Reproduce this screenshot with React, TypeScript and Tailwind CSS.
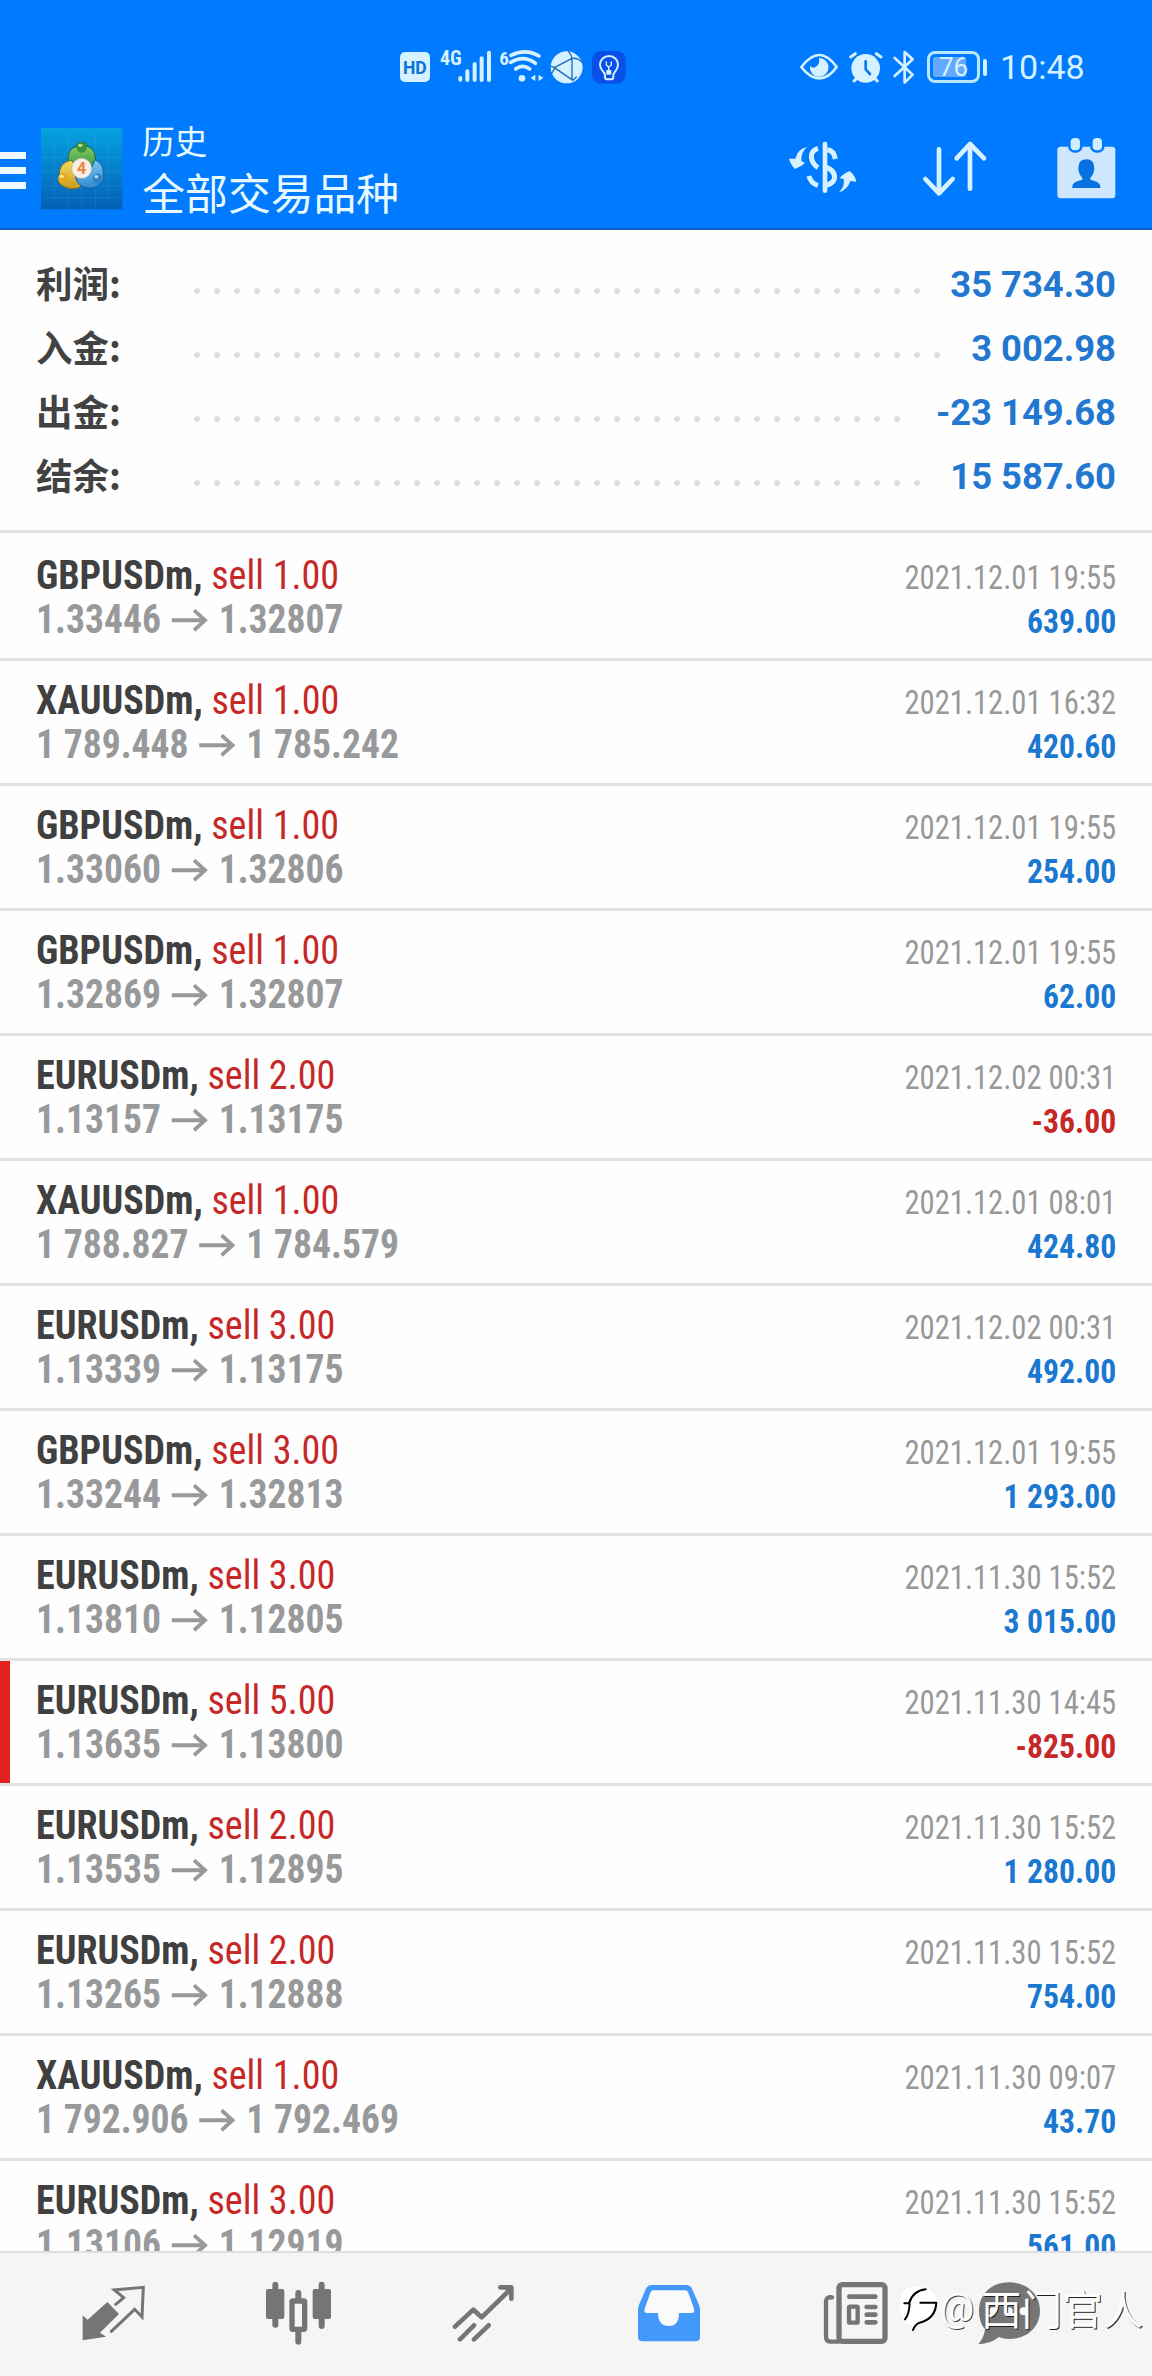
import type { ReactNode } from "react";

type Deal = {
  symbol: string;
  volume: string;
  open: string;
  close: string;
  time: string;
  profit: string;
  stopped?: boolean;
};

const summary = [
  { label: "利润:", value: "35 734.30", dots: 37 },
  { label: "入金:", value: "3 002.98", dots: 38 },
  { label: "出金:", value: "-23 149.68", dots: 36 },
  { label: "结余:", value: "15 587.60", dots: 37 },
];

const deals: Deal[] = [
  { symbol: "GBPUSDm", volume: "1.00", open: "1.33446", close: "1.32807", time: "2021.12.01 19:55", profit: "639.00" },
  { symbol: "XAUUSDm", volume: "1.00", open: "1 789.448", close: "1 785.242", time: "2021.12.01 16:32", profit: "420.60" },
  { symbol: "GBPUSDm", volume: "1.00", open: "1.33060", close: "1.32806", time: "2021.12.01 19:55", profit: "254.00" },
  { symbol: "GBPUSDm", volume: "1.00", open: "1.32869", close: "1.32807", time: "2021.12.01 19:55", profit: "62.00" },
  { symbol: "EURUSDm", volume: "2.00", open: "1.13157", close: "1.13175", time: "2021.12.02 00:31", profit: "-36.00" },
  { symbol: "XAUUSDm", volume: "1.00", open: "1 788.827", close: "1 784.579", time: "2021.12.01 08:01", profit: "424.80" },
  { symbol: "EURUSDm", volume: "3.00", open: "1.13339", close: "1.13175", time: "2021.12.02 00:31", profit: "492.00" },
  { symbol: "GBPUSDm", volume: "3.00", open: "1.33244", close: "1.32813", time: "2021.12.01 19:55", profit: "1 293.00" },
  { symbol: "EURUSDm", volume: "3.00", open: "1.13810", close: "1.12805", time: "2021.11.30 15:52", profit: "3 015.00" },
  { symbol: "EURUSDm", volume: "5.00", open: "1.13635", close: "1.13800", time: "2021.11.30 14:45", profit: "-825.00", stopped: true },
  { symbol: "EURUSDm", volume: "2.00", open: "1.13535", close: "1.12895", time: "2021.11.30 15:52", profit: "1 280.00" },
  { symbol: "EURUSDm", volume: "2.00", open: "1.13265", close: "1.12888", time: "2021.11.30 15:52", profit: "754.00" },
  { symbol: "XAUUSDm", volume: "1.00", open: "1 792.906", close: "1 792.469", time: "2021.11.30 09:07", profit: "43.70" },
  { symbol: "EURUSDm", volume: "3.00", open: "1.13106", close: "1.12919", time: "2021.11.30 15:52", profit: "561.00" },
];

// icons are drawn on a 3x grid: one css pixel is three units
function Icon({ box, className = "", children }: { box: [number, number, number, number]; className?: string; children: ReactNode }) {
  return (
    <svg
      viewBox={box.join(" ")}
      width={box[2] / 3}
      height={box[3] / 3}
      fill="none"
      strokeLinecap="round"
      strokeLinejoin="round"
      className={`shrink-0 overflow-visible ${className}`}
    >
      {children}
    </svg>
  );
}

function StatusBar() {
  return (
    <div className="h-[110px] pt-[24px] pl-[400px] pr-[70px] flex items-center text-[#d6f1ff]">
      <div className="w-[30px] h-[30px] rounded-[5px] bg-[#d6f1ff] text-[#0a72d8] text-[19px] leading-none font-bold flex items-center justify-center">
        <span className="scale-x-[0.92]">HD</span>
      </div>
      <span className="ml-[10px] w-[18px] h-[30px] text-[20px] leading-[13px] font-bold font-stretch-condensed">4G</span>
      <Icon box={[232, 65, 100, 95]}>
        <path d="M239 146v5M260 126v26M282 104v48M303 87v65M325 70v82" stroke="currentColor" strokeWidth="12" />
      </Icon>
      <span className="ml-[8px] w-[9px] h-[30px] text-[19px] leading-[13px] font-bold font-stretch-condensed">6</span>
      <Icon box={[386, 65, 106, 95]}>
        <path d="M395 78Q439 56 479 80M394 99Q433 76 468 102M409 119Q430 103 451 119" stroke="currentColor" strokeWidth="11" />
        <circle cx="428" cy="147" r="10" fill="currentColor" />
        <path d="M468 136v19l-14-9zM478 136v19l14-9z" fill="currentColor" />
      </Icon>
      <Icon box={[514, 62, 96, 98]} className="ml-[7px]">
        <circle cx="561" cy="111" r="48" fill="currentColor" />
        <path d="M567 64q8 8 10 20M577 84v62M524 112L577 84Q597 82 608 97M524 112l56 38M514 108l12 4-9 16M580 150l10-10" stroke="#176ec0" strokeWidth="4" />
      </Icon>
      <Icon box={[637, 62, 101, 98]} className="ml-[9px]">
        <rect x="637" y="62" width="101" height="98" rx="26" fill="#0a50e8" />
        <path d="M676 134c0-9-15-14-15-31a27 26 0 0 1 54 0c0 17-14 22-14 31v6q0 7-6 7h-13q-6 0-6-7z" stroke="currentColor" strokeWidth="6" />
        <path d="M680 95v9l7 7 8-7v-9M687 111v14" stroke="currentColor" strokeWidth="4" />
        <path d="M680 119h15v14h-15z" fill="currentColor" />
      </Icon>

      <div className="ml-auto flex items-center">
        <Icon box={[60, 70, 114, 84]}>
          <path d="M64 112Q92 76 118 76T170 112Q146 146 118 146T64 112z" stroke="currentColor" strokeWidth="8" />
          <path d="M117 85a28 28 0 1 1-27 24q10 10 20 1t7-25z" fill="currentColor" />
        </Icon>
        <Icon box={[207, 62, 101, 98]} className="ml-[11px]">
          <circle cx="257" cy="114" r="43" fill="currentColor" />
          <path d="M212 80l14-10M303 80l-14-10M222 152l8-8M292 152l-8-8" stroke="currentColor" strokeWidth="9" />
          <path d="M257 93v24l13 14" stroke="#0878ec" strokeWidth="8" />
        </Icon>
        <Icon box={[340, 60, 65, 104]} className="ml-[11px]">
          <path d="M345 84l54 50-24 24V66l24 22-54 50" stroke="currentColor" strokeWidth="8" />
        </Icon>
        <div className="relative ml-[12px] w-[53px] h-[32px] rounded-[8px] border-[3px] border-[#b8e6ff] flex items-center justify-center">
          <div className="absolute left-[3px] top-[3px] h-[20px] w-[33px] rounded-[2px] bg-[#62a9ff]" />
          <span className="relative text-[26px] leading-none">76</span>
        </div>
        <div className="ml-[3px] w-[4px] h-[17px] rounded-full bg-[#d6f1ff]" />
        <span className="ml-[13px] w-[82px] text-[34px] leading-[34px] whitespace-nowrap">10:48</span>
      </div>
    </div>
  );
}

function AppLogo() {
  return (
    <Icon box={[123, 55, 244, 244]} className="ml-[15px]">
      <defs>
        <linearGradient id="tile" x1="0" y1="0" x2="0" y2="1">
          <stop offset="0" stopColor="#04a2de" />
          <stop offset=".5" stopColor="#0580cc" />
          <stop offset="1" stopColor="#0460b4" />
        </linearGradient>
        <linearGradient id="green" x1="0" y1="0" x2="0" y2="1">
          <stop offset="0" stopColor="#9bd36a" />
          <stop offset="1" stopColor="#1e8a3c" />
        </linearGradient>
        <linearGradient id="gold" x1="0" y1="0" x2="0" y2="1">
          <stop offset="0" stopColor="#f4dc62" />
          <stop offset="1" stopColor="#c99a1c" />
        </linearGradient>
        <linearGradient id="azure" x1="0" y1="0" x2="0" y2="1">
          <stop offset="0" stopColor="#7cc4f0" />
          <stop offset="1" stopColor="#2f8ad2" />
        </linearGradient>
      </defs>
      <rect x="123" y="55" width="244" height="244" fill="url(#tile)" />
      <path d="M163 100v170M204 70v229M245 55v244M286 70v229M325 100v170M123 100h244M123 143h244M123 186h244M123 229h244M140 265h210" stroke="#3db4e6" strokeOpacity=".35" strokeWidth="2" />
      <path d="M204 160q-4-44 26-50 0-12 16-12t16 12q30 8 24 60l-20 20h-44z" fill="url(#green)" stroke="#0e5c50" strokeWidth="3" />
      <path d="M212 152q-38 8-34 50-8 14 6 24 26 20 58 6l4-46z" fill="url(#gold)" stroke="#6a6a28" strokeWidth="3" />
      <path d="M286 150q28 12 24 50 2 14-8 20-22 24-52 12-22-10-24-36l40-4z" fill="url(#azure)" stroke="#145898" strokeWidth="3" />
      <circle cx="245" cy="113" r="16" fill="#38933c" />
      <circle cx="189" cy="206" r="15" fill="#dfa920" />
      <circle cx="293" cy="207" r="15" fill="#2c83cc" />
      <ellipse cx="241" cy="107" rx="7" ry="5" fill="#b6e08c" />
      <ellipse cx="185" cy="200" rx="6" ry="5" fill="#fbeb9c" />
      <ellipse cx="289" cy="201" rx="6" ry="5" fill="#a8dcfa" />
      <circle cx="245" cy="176" r="30" fill="#f7efe6" stroke="#c9b8a0" strokeWidth="2" />
      <text x="245" y="193" textAnchor="middle" fontSize="48" fontWeight="700" fill="#ec8440">4</text>
    </Icon>
  );
}

function Header() {
  return (
    <div className="h-[120px] flex items-start border-b-2 border-[#0d60cc] text-[#d6f1ff]">
      <div className="mt-[42px] flex flex-col gap-[8px]">
        <div className="w-[26px] h-[7px] bg-[#eefaff]" />
        <div className="w-[26px] h-[7px] bg-[#eefaff]" />
        <div className="w-[26px] h-[7px] bg-[#eefaff]" />
      </div>
      <div className="mt-[18px]">
        <AppLogo />
      </div>
      <div className="ml-[20px] mt-[10px] text-[#e8faff] font-['Noto_Sans_CJK_SC',sans-serif]">
        <div className="text-[32.5px] leading-[40px]">历史</div>
        <div className="mt-[6px] text-[42.8px] leading-[50px]">全部交易品种</div>
      </div>
      <div className="ml-auto mt-[28px] mr-[36px] flex items-start">
        <Icon box={[85, 84, 202, 184]}>
          <path d="M193 102v140" stroke="currentColor" strokeWidth="14" />
          <path d="M172 115q-20 6-20 26 2 20 20 32M200 119q20 2 24 28M145 198q5 22 27 28M196 172q30 10 25 36-6 14-25 18" stroke="currentColor" strokeWidth="15" strokeLinecap="butt" />
          <path d="M138 112q-26 4-34 34l-19 0q6 20 18 31 20-8 30-18l-11-6q-2-24 16-41zM235 247q26-8 34-34l18 2q-2-16-20-32-20 8-30 22l12 2q4 22-14 40z" fill="currentColor" />
        </Icon>
        <Icon box={[487, 84, 190, 184]} className="ml-[67px]">
          <path d="M535 118v132M494 207l41 43 41-43M628 236V102M588 145l40-43 42 43" stroke="currentColor" strokeWidth="14" />
        </Icon>
        <Icon box={[890, 84, 176, 184]} className="ml-[71px]">
          <rect x="891" y="110" width="174" height="155" rx="10" fill="#cfe6ff" />
          <rect x="923" y="78" width="44" height="50" rx="20" fill="#007bff" />
          <rect x="989" y="78" width="44" height="50" rx="20" fill="#007bff" />
          <rect x="931" y="84" width="28" height="37" rx="12" fill="#cfeeff" />
          <rect x="997" y="84" width="28" height="37" rx="12" fill="#cfeeff" />
          <path d="M978 148q24 0 24 27-1 19-12 28v6q30 6 30 20v5h-84v-5q0-14 30-20v-6q-11-9-12-28 0-27 24-27z" fill="#0672e0" />
        </Icon>
      </div>
    </div>
  );
}

function Summary() {
  return (
    <div className="pt-[22px] pb-[22px] pl-[36px] pr-[36px] border-b-[3px] border-[#e3e3e3]">
      {summary.map(({ label, value, dots }) => (
        <div key={label} className="h-[64px] flex items-center">
          <span className="w-[151px] pb-[3px] text-[36.5px] leading-[61px] font-bold text-[#424242] font-['Noto_Sans_CJK_SC',sans-serif]">{label}</span>
          <div
            className="h-[20px] mt-[13px] bg-[radial-gradient(circle,#dedede_2.6px,transparent_3.4px)] bg-size-[20px_20px]"
            style={{ width: dots * 20 }}
          />
          <span className="ml-auto pt-[1px] text-[36.4px] leading-[64px] font-bold text-[#2277d0] whitespace-nowrap">{value}</span>
        </div>
      ))}
    </div>
  );
}

function DealRow({ deal }: { deal: Deal }) {
  const loss = deal.profit.startsWith("-");
  return (
    <div className="h-[125px] shrink-0 flex pr-[36px] border-b-[3px] border-[#e3e3e3] leading-[44px] whitespace-nowrap font-['Roboto_Condensed',Roboto,sans-serif] font-stretch-condensed">
      <div className={`w-[10px] h-[122px] mr-[26px] ${deal.stopped ? "bg-[#e2201c]" : ""}`} />
      <div className="pt-[16.5px] text-[41px]">
        <div className="origin-left scale-x-[0.928]">
          <span className="font-bold text-[#404040]">{deal.symbol},</span> <span className="text-[#c62828]">sell {deal.volume}</span>
        </div>
        <div className="origin-left scale-x-[0.917] flex items-center font-bold text-[#98999b]">
          {deal.open}
          <Icon box={[511, 265, 117, 68]} className="mx-[12px] mt-[4px]">
            <path d="M511 299h108M584 269l36 30-36 30" stroke="currentColor" strokeWidth="12" strokeLinecap="butt" strokeLinejoin="miter" />
          </Icon>
          {deal.close}
        </div>
      </div>
      <div className="ml-auto pt-[20px] text-[33px] text-right">
        <div className="origin-right scale-x-[0.928] text-[#989898]">{deal.time}</div>
        <div className={`origin-right scale-x-[0.96] font-bold ${loss ? "text-[#c62828]" : "text-[#1b78d0]"}`}>{deal.profit}</div>
      </div>
    </div>
  );
}

function TabBar() {
  return (
    <div className="relative h-[125px] shrink-0 bg-[#f5f5f5] border-t-2 border-[#dedede] pl-[20px] pb-[2px] flex items-center text-[#757575]">
      <div className="w-[186px] flex justify-center">
        <Icon box={[247, 335, 188, 188]}>
          <path d="M323 395l35 36-57 56 18 12-70 11V435l15 13z" fill="currentColor" />
          <path d="M348 402l24-20-28-23 87-8-4 89-22-23-70 66" stroke="currentColor" strokeWidth="9" strokeLinejoin="miter" />
        </Icon>
      </div>
      <div className="w-[184px] flex justify-center">
        <Icon box={[797, 335, 195, 188]}>
          <path d="M825 343v120M964 343v124M894 368v28M894 480v34" stroke="currentColor" strokeWidth="18" />
          <rect x="797" y="356" width="55" height="90" rx="6" fill="currentColor" />
          <rect x="937" y="356" width="55" height="90" rx="6" fill="currentColor" />
          <rect x="875" y="392" width="38" height="85" rx="3" fill="#f5f5f5" stroke="currentColor" strokeWidth="16" />
        </Icon>
      </div>
      <div className="w-[186px] flex justify-center">
        <Icon box={[159, 152, 182, 188]}>
          <path d="M165 286l55-51 25 23 88-86M180 324l42-42M222 324l44-42" stroke="currentColor" strokeWidth="14" />
          <path d="M301 168h33v34" stroke="currentColor" strokeWidth="14" />
          <path d="M312 170h24v26z" fill="currentColor" />
        </Icon>
      </div>
      <div className="w-[186px] flex justify-center">
        <Icon box={[714, 152, 186, 188]}>
          <path d="M755 161h104q12 0 17 11l21 48q3 8 3 16v80q0 14-14 14H728q-14 0-14-14v-80q0-8 3-16l21-48q5-11 17-11z" fill="#4399fb" />
          <path d="M760 177h94q8 0 11 7l17 48q4 13-8 13h-37q0 39-31 39t-32-39h-32q-12 0-8-13l17-48q3-7 9-7z" fill="#fafafa" />
        </Icon>
      </div>
      <div className="w-[188px] flex justify-center">
        <Icon box={[132, 152, 192, 188]}>
          <rect x="177" y="160" width="138" height="170" rx="10" stroke="currentColor" strokeWidth="16" />
          <path d="M156 198q-18-2-18 12v106q0 15 15 15h24" stroke="currentColor" strokeWidth="13" />
          <path d="M208 196h78M260 227h26M260 250h26M260 273h26" stroke="currentColor" strokeWidth="14" />
          <rect x="207" y="226" width="26" height="48" rx="3" stroke="currentColor" strokeWidth="13" />
        </Icon>
      </div>
      <Icon box={[594, 152, 188, 188]} className="ml-[28px]">
        <path d="M687 153c54 0 93 36 93 85s-39 85-93 85q-18 0-30-6-24 20-62 22 18-22 20-45-18-20-18-56c0-49 36-85 90-85z" fill="currentColor" />
        <circle cx="639" cy="240" r="12" fill="#fafafa" />
        <circle cx="686" cy="240" r="12" fill="#fafafa" />
        <circle cx="731" cy="240" r="12" fill="#fafafa" />
      </Icon>

      {/* author mark over the last tab */}
      <div className="absolute left-[898px] top-[30px] flex items-center text-[#fdfdfd]">
        <Icon box={[355, 185, 120, 140]}>
          <path d="M368 205q20-20 54-15 38 2 48 36 6 38-22 62-24 20-48 20-34-10-38-54-2-26 6-49z" fill="#fff" />
          <path d="M374 240h14q12-38 50-42M390 242q-2 32-14 46M422 238h48q-2 48-50 60-14 6-20 22" stroke="#000" strokeWidth="6" />
        </Icon>
        <span className="ml-[2px] w-[41px] text-[38px] leading-[50px] [text-shadow:1px_1px_0_#444]">@</span>
        <span className="text-[40.6px] leading-[50px] whitespace-nowrap font-['Noto_Sans_CJK_SC',sans-serif] [text-shadow:1px_1px_0_#222]">西门官人</span>
      </div>
    </div>
  );
}

export default function App() {
  return (
    <div className="w-[1152px] h-[2376px] flex flex-col overflow-hidden bg-[#fefefe] font-[Roboto,'Noto_Sans_CJK_SC',sans-serif]">
      <div className="shrink-0 bg-[#007bff]">
        <StatusBar />
        <Header />
      </div>
      <Summary />
      <div className="flex-1 min-h-0 flex flex-col overflow-hidden pt-[3px]">
        {deals.map((deal, i) => (
          <DealRow key={i} deal={deal} />
        ))}
      </div>
      <TabBar />
    </div>
  );
}
